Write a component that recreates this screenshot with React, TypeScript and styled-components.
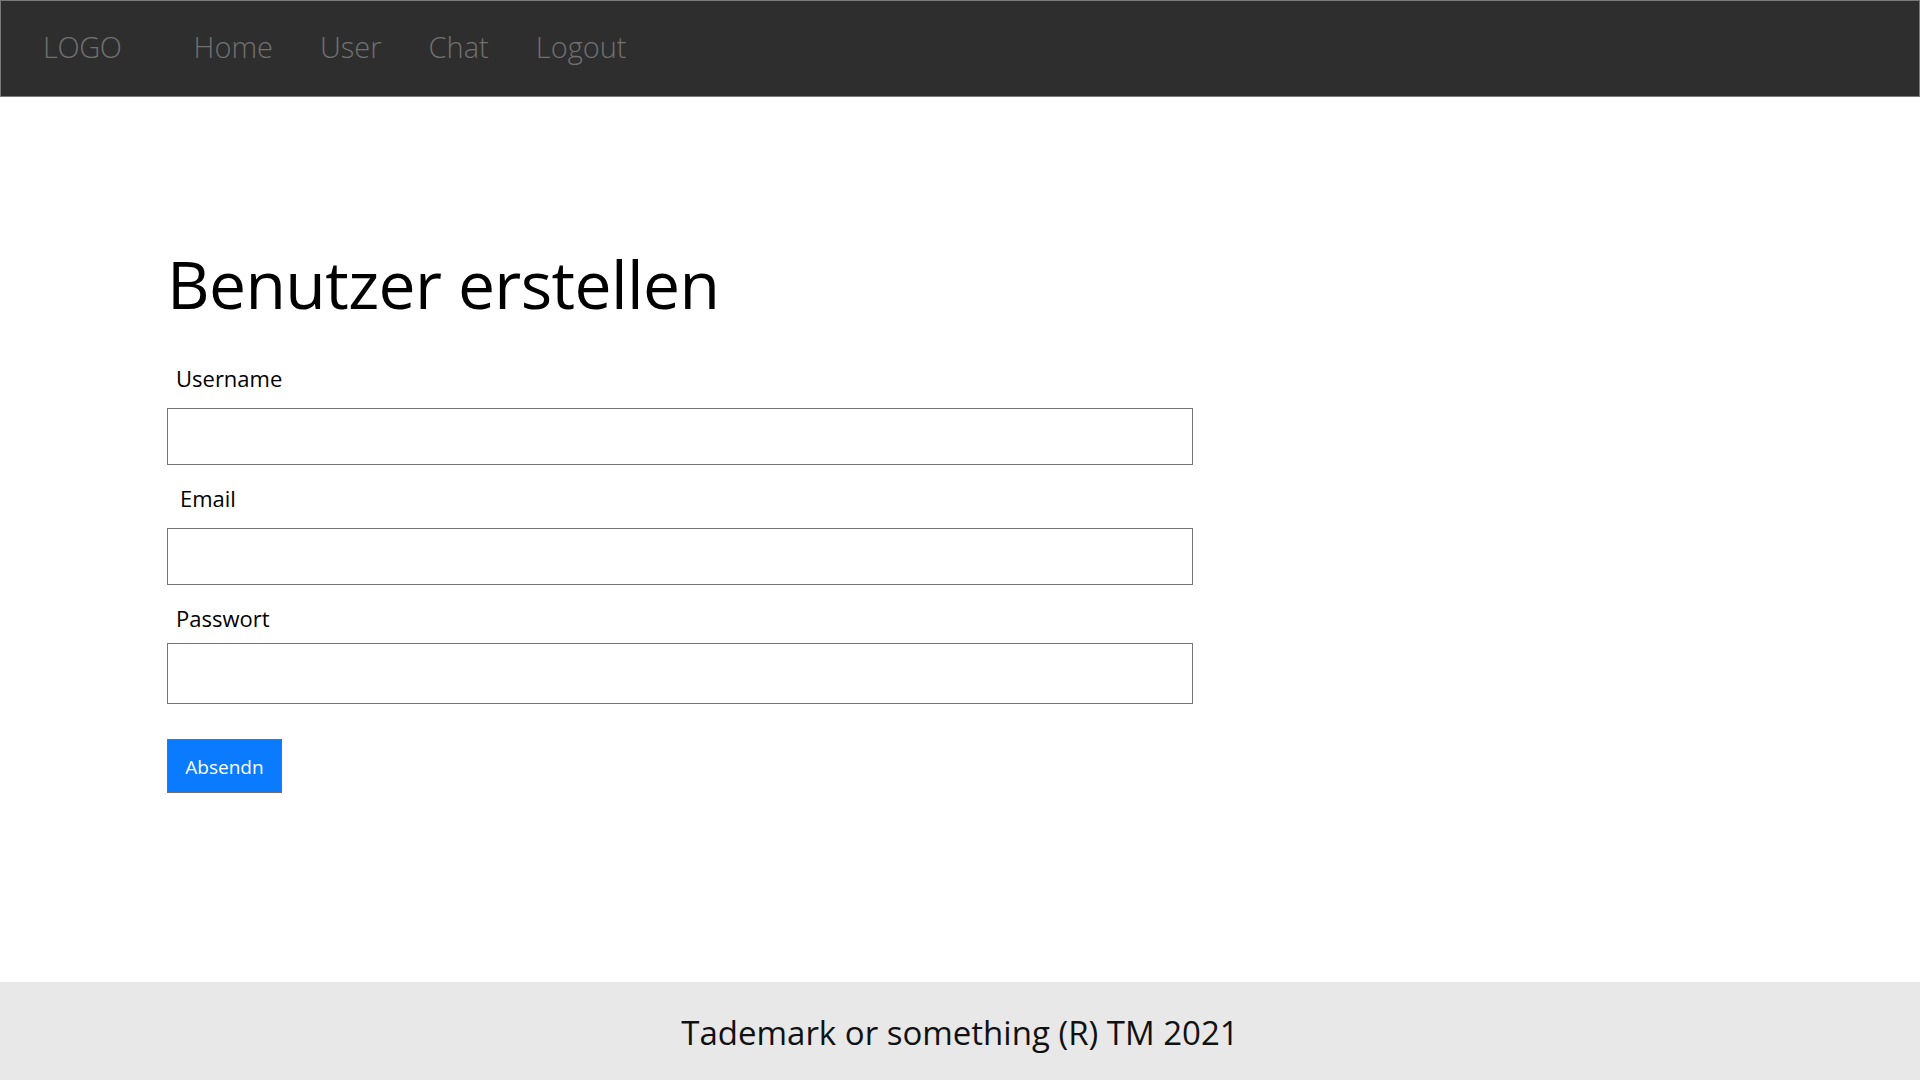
import React from "react";
import styled, { createGlobalStyle } from "styled-components";

const GlobalStyle = createGlobalStyle`
  html, body {
    margin: 0;
    padding: 0;
    background: #ffffff;
    font-family: "Open Sans", "Noto Sans", sans-serif;
  }
  * { box-sizing: border-box; }
`;

const Page = styled.div`
  min-height: 100vh;
  display: flex;
  flex-direction: column;
`;

const NavBar = styled.nav`
  height: 97px;
  background: #2e2e2e;
  border: 1px solid #7a7a7a;
  display: flex;
  align-items: center;
  padding: 0 0 4px 42px;
`;

const Logo = styled.div`
  font-size: 29px;
  font-weight: 300;
  color: #717171;
  margin-right: 72px;
  letter-spacing: -0.4px;
`;

const NavLinks = styled.ul`
  list-style: none;
  margin: 0;
  padding: 0;
  display: flex;
  gap: 47px;
`;

const NavLink = styled.a`
  font-size: 29px;
  font-weight: 300;
  color: #717171;
  text-decoration: none;
  letter-spacing: 0px;
  cursor: pointer;
`;

const Main = styled.main`
  flex: 1;
  padding: 147px 0 0 167px;
`;

const Heading = styled.h1`
  margin: 0 0 44px 0;
  font-size: 66px;
  font-weight: 400;
  line-height: 78px;
  color: #000;
  letter-spacing: -0.6px;
`;

const Form = styled.form`
  width: 1026px;
  display: flex;
  flex-direction: column;
`;

const Label = styled.label<{ $indent: number; $gap: number }>`
  display: block;
  font-size: 22px;
  line-height: 24px;
  color: #000;
  padding-left: ${(p) => p.$indent}px;
  margin-bottom: ${(p) => p.$gap}px;
`;

const Input = styled.input<{ $h: number }>`
  width: 100%;
  height: ${(p) => p.$h}px;
  border: 1px solid #767676;
  border-radius: 0;
  background: #fff;
  margin: 0 0 21px 0;
  padding: 0 10px;
  font-size: 20px;
  font-family: inherit;
  outline: none;
`;

const Button = styled.button`
  align-self: flex-start;
  margin-top: 14px;
  width: 115px;
  height: 54px;
  background: #0a7bff;
  color: #fff;
  border: 1px solid #6f6f6f;
  border-radius: 0;
  font-family: inherit;
  font-size: 19px;
  padding: 1px 0 0 0;
  cursor: pointer;
`;

const Footer = styled.footer`
  height: 98px;
  background: #e8e8e8;
  display: flex;
  align-items: center;
  justify-content: center;
  font-size: 33px;
  color: #111;
  padding-top: 3px;
`;

const links = ["Home", "User", "Chat", "Logout"];

export default function App() {
  return (
    <Page>
      <GlobalStyle />
      <NavBar>
        <Logo>LOGO</Logo>
        <NavLinks>
          {links.map((l) => (
            <li key={l}>
              <NavLink>{l}</NavLink>
            </li>
          ))}
        </NavLinks>
      </NavBar>
      <Main>
        <Heading>Benutzer erstellen</Heading>
        <Form onSubmit={(e) => e.preventDefault()}>
          <Label $indent={9} $gap={18} htmlFor="username">Username</Label>
          <Input $h={57} id="username" type="text" />
          <Label $indent={13} $gap={18} htmlFor="email">Email</Label>
          <Input $h={57} id="email" type="email" />
          <Label $indent={9} $gap={13} htmlFor="password">Passwort</Label>
          <Input $h={61} id="password" type="password" />
          <Button type="submit">Absendn</Button>
        </Form>
      </Main>
      <Footer>Tademark or something (R) TM 2021</Footer>
    </Page>
  );
}
